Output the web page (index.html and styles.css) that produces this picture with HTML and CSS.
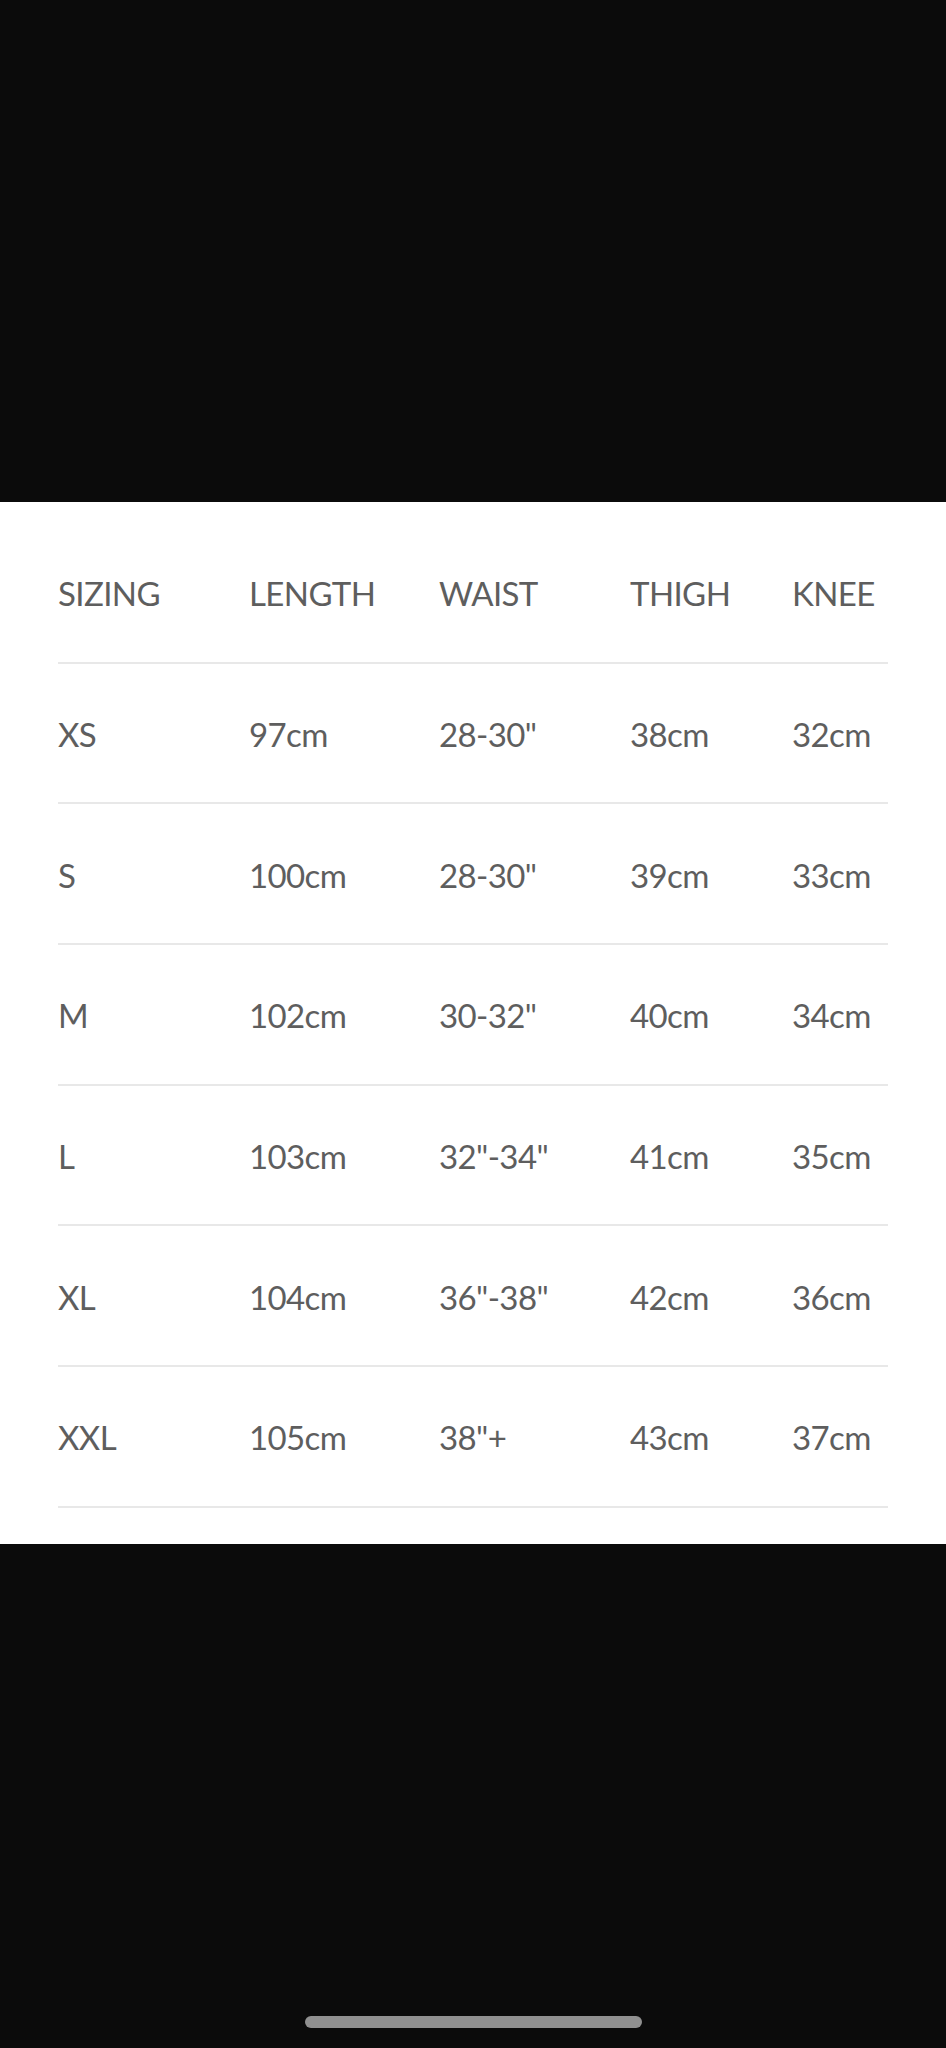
FILE: index.html
```html
<!DOCTYPE html>
<html>
<head>
<meta charset="utf-8">
<link rel="stylesheet" href="styles.css">
</head>
<body>
<div class="screen">
  <div class="top-space"></div>
  <div class="panel">
    <div class="table">
      <div class="row head"><span>SIZING</span><span>LENGTH</span><span>WAIST</span><span>THIGH</span><span>KNEE</span></div>
      <div class="row"><span>XS</span><span>97cm</span><span>28-30"</span><span>38cm</span><span>32cm</span></div>
      <div class="row"><span>S</span><span>100cm</span><span>28-30"</span><span>39cm</span><span>33cm</span></div>
      <div class="row"><span>M</span><span>102cm</span><span>30-32"</span><span>40cm</span><span>34cm</span></div>
      <div class="row"><span>L</span><span>103cm</span><span>32"-34"</span><span>41cm</span><span>35cm</span></div>
      <div class="row"><span>XL</span><span>104cm</span><span>36"-38"</span><span>42cm</span><span>36cm</span></div>
      <div class="row"><span>XXL</span><span>105cm</span><span>38"+</span><span>43cm</span><span>37cm</span></div>
    </div>
  </div>
  <div class="bottom-space">
    <div class="home-indicator"></div>
  </div>
</div>
</body>
</html>
```

FILE: styles.css
```css
html, body {
  margin: 0;
  padding: 0;
  background: #0b0b0b;
}
.screen {
  width: 946px;
  height: 2048px;
  display: flex;
  flex-direction: column;
  background: #0b0b0b;
}
.top-space {
  height: 502px;
  flex: none;
}
.panel {
  background: #ffffff;
  height: 1042px;
  flex: none;
  box-sizing: border-box;
  padding: 21px 58px 0 58px;
}
.table {
  width: 830px;
  font-family: "Lato", "Liberation Sans", sans-serif;
  font-size: 33px;
  letter-spacing: -0.6px;
  color: #5e5e5e;
}
.row {
  display: grid;
  grid-template-columns: 191px 190px 191px 162px 1fr;
  align-items: center;
  height: 140.67px;
  box-sizing: border-box;
  border-bottom: 2px solid #e8e8e8;
  padding-top: 2px;
}
.row span {
  white-space: nowrap;
}
.bottom-space {
  flex: 1;
  display: flex;
  justify-content: center;
  align-items: flex-end;
  padding-bottom: 20px;
}
.home-indicator {
  width: 337px;
  height: 12px;
  border-radius: 6px;
  background: #909090;
}
```
